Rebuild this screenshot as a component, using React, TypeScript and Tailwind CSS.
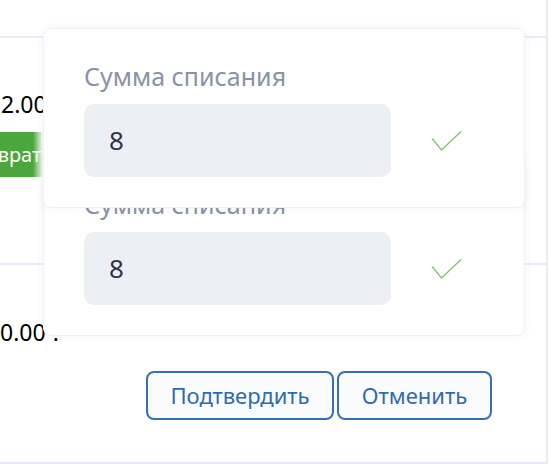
import React from "react";

function Check() {
  return (
    <svg width="32" height="24" viewBox="0 0 32 24" fill="none">
      <path d="M1 7.5 L10.5 19 L30 0.5" stroke="#84c476" strokeWidth="1.4" />
    </svg>
  );
}

// карточка с полем суммы
function AmountCard({ top, z }: { top: string; z: string }) {
  return (
    <div
      className={`absolute left-[43px] ${top} ${z} w-[482px] h-[180px] rounded-lg bg-white border border-[#eff1f7] shadow-[0_0_8px_rgba(40,60,140,0.06)] pl-[40px] pt-[30px]`}
    >
      <div className="text-[25px] leading-[34px] text-[#8a93a5]">Сумма списания</div>
      <div className="mt-[11px] flex items-center">
        <div className="w-[307px] h-[73px] rounded-[10px] bg-[#eceff4] pl-[25px] flex items-center text-[26px] text-[#2f3344]">
          8
        </div>
        <div className="ml-[40px] mt-[4px]">
          <Check />
        </div>
      </div>
    </div>
  );
}

export default function App() {
  return (
    <div className="relative w-[550px] h-[464px] bg-white overflow-hidden font-['Noto_Sans',sans-serif]">
      {/* таблица за попапом */}
      <div className="w-[548px] h-full border-r-2 border-[#e9ecf8] flex flex-col">
        <div className="h-[38px] shrink-0 border-b-2 border-[#e6ebf8]" />
        <div className="h-[227px] shrink-0 border-b-2 border-[#e6ebf8] overflow-hidden">
          <div className="mt-[51px] ml-[1px] text-[23px] leading-[30px] text-black whitespace-nowrap">2.000</div>
          <div className="mt-[13px] ml-[-49px] w-[92px] h-[45px] flex items-center pl-[12px] text-[20px] text-white whitespace-nowrap overflow-hidden bg-[linear-gradient(to_right,#4ba73d_0,#4ba73d_82px,#ffffff_92px)]">
            Возврат
          </div>
        </div>
        <div className="flex-1 border-b-2 border-[#e6ebf8]">
          <div className="mt-[52px] text-[23px] leading-[30px] text-black whitespace-nowrap">
            0.00<span className="ml-[7px]">.</span>
          </div>
          <div className="mt-[24px] flex justify-end pr-[54px] gap-[3px]">
            <button className="w-[188px] h-[49px] rounded-[8px] border-2 border-[#3470b5] bg-[#f9fbfd] text-[22px] text-[#2f6ab0]">
              Подтвердить
            </button>
            <button className="w-[155px] h-[49px] rounded-[8px] border-2 border-[#3470b5] bg-[#f9fbfd] text-[22px] text-[#2f6ab0]">
              Отменить
            </button>
          </div>
        </div>
      </div>

      {/* попапы */}
      <AmountCard top="top-[156px]" z="z-10" />
      <AmountCard top="top-[28px]" z="z-20" />
    </div>
  );
}
